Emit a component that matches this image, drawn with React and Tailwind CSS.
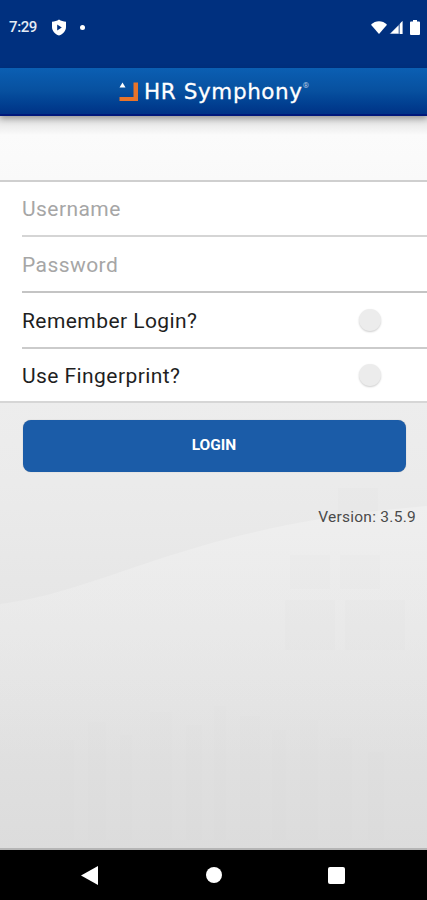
export default function App() {
  const rowText = "text-[21px] font-['Roboto',sans-serif] tracking-[0.43px] mt-[3px]";
  const skyline = [
    [60, 740, 14, 100], [88, 722, 18, 118], [120, 735, 12, 105], [150, 712, 22, 128], [186, 725, 16, 115],
    [214, 706, 12, 134], [240, 716, 20, 124], [272, 730, 14, 110], [300, 720, 18, 120], [330, 738, 22, 102], [368, 752, 16, 88],
  ];
  const panes = [
    [338, 488, 40, 30], [290, 555, 40, 34], [340, 555, 40, 34], [285, 600, 50, 50], [345, 600, 60, 50],
  ];
  return (
    <div className="w-[427px] h-[900px] flex flex-col overflow-hidden font-['Roboto',sans-serif]">
      {/* Status bar */}
      <div className="h-[68px] bg-[#00307f] flex items-start justify-between pl-[9px] pr-[7px] pt-[17px] text-white">
        <div className="flex items-center h-[20px]">
          <span className="text-[15px] font-medium tracking-[-0.4px] w-[32px] text-[#e4ebf5]">7:29</span>
          <svg width="16" height="17" viewBox="0 0 16 17" className="ml-[10px]">
            <path d="M8 0.5 C10 1.8 12.5 2.6 15 2.8 V8 C15 12 12 15.2 8 16.5 C4 15.2 1 12 1 8 V2.8 C3.5 2.6 6 1.8 8 0.5 Z" fill="#ffffff" />
            <path d="M6.2 5.5 L10.8 8.5 L6.2 11.5 Z" fill="#00307f" />
          </svg>
          <span className="ml-[13px] w-[5px] h-[5px] rounded-full bg-white" />
        </div>
        <div className="flex items-center h-[20px] gap-[2px]">
          <svg width="16" height="13" viewBox="0 0 16 13">
            <path d="M0 3.8 C4.5 -0.8 11.5 -0.8 16 3.8 L8 13 Z" fill="#ffffff" />
          </svg>
          <svg width="14" height="13" viewBox="0 0 14 13">
            <path d="M13.5 0 V13 H0.5 Z" fill="#ffffff" fillOpacity="0.4" />
            <path d="M9.5 4.5 V12.5 H1.5 Z" fill="#ffffff" />
            <path d="M11 2.5 V13 H13.5 V0 Z" fill="#ffffff" />
          </svg>
          <svg width="10" height="15" viewBox="0 0 10 15" className="ml-[5px]">
            <path d="M3 0 H7 V1.5 H9 a1 1 0 0 1 1 1 V14 a1 1 0 0 1 -1 1 H1 a1 1 0 0 1 -1 -1 V2.5 a1 1 0 0 1 1 -1 H3 Z" fill="#ffffff" />
          </svg>
        </div>
      </div>

      {/* App header */}
      <div className="h-[48px] bg-gradient-to-b from-[#0b5fb3] via-[#07509f] to-[#003286] border-b-2 border-[#00187a] flex items-center justify-center shadow-[0_3px_6px_rgba(0,0,0,0.3)] z-10 relative">
        <div className="flex items-center ml-[1px] mt-[2px]">
          <svg width="19" height="19" viewBox="0 0 19 19" className="mr-[6px] mt-[-2px]">
            <path d="M0.5 5.5 L3.5 0.5 L6.5 5.5 Z" fill="#ffffff" />
            <path d="M14.5 0.5 H19 V19 H0.5 V15 L14.5 15 Z" fill="#e8742a" />
          </svg>
          <span className="text-[21.5px] font-['DejaVu_Sans',sans-serif] text-white tracking-[0.6px] leading-none [-webkit-text-stroke:0.3px_white]">HR Symphony</span>
          <span className="text-[8px] text-[#b9c9e2] self-start leading-none mt-[1px]">®</span>
        </div>
      </div>

      {/* Content */}
      <div className="relative flex-1 bg-gradient-to-b from-[#f4f4f4] via-[#ebebeb] to-[#dcdcdc] flex flex-col">
        <svg className="absolute left-0 top-0" width="427" height="733" viewBox="0 116 427 733">
          <defs>
            <linearGradient id="waveFade" x1="0" y1="0" x2="0" y2="1">
              <stop offset="0" stopColor="#f3f3f3" stopOpacity="0.55" />
              <stop offset="1" stopColor="#f3f3f3" stopOpacity="0" />
            </linearGradient>
          </defs>
          <path d="M0 604 C110 590 190 525 427 506 V760 H0 Z" fill="url(#waveFade)" />
          <g fill="#cfcfcf" fillOpacity="0.05">
            {skyline.map(([x, y, w, h]) => (
              <rect key={x} x={x} y={y} width={w} height={h} />
            ))}
          </g>
          <g fill="#d8d8d8" fillOpacity="0.04">
            {panes.map(([x, y, w, h]) => (
              <rect key={`${x}-${y}`} x={x} y={y} width={w} height={h} />
            ))}
          </g>
        </svg>
        <div className="h-[64px] bg-gradient-to-b from-[#dedede] via-[#fbfbfb] via-30% to-[#f9f9f9]" />
        <div className="relative bg-white border-t-2 border-[#cfcfcf] border-b-2 border-b-[#d6d6d6] h-[223px] flex flex-col pl-[22px]">
          <div className="h-[55px] border-b-2 border-[#d5d5d5] flex items-center">
            <span className={`${rowText} text-[#a6a6a6]`}>Username</span>
          </div>
          <div className="h-[56px] border-b-2 border-[#c4c4c4] flex items-center">
            <span className={`${rowText} text-[#a6a6a6]`}>Password</span>
          </div>
          <div className="h-[56px] border-b-2 border-[#cbcbcb] flex items-center justify-between pr-[46px]">
            <span className={`${rowText} text-[#1f1f1f]`}>Remember Login?</span>
            <span className="w-[22px] h-[22px] rounded-full bg-[#ececec] shadow-[0_1px_2px_rgba(0,0,0,0.2)]" />
          </div>
          <div className="flex-1 flex items-center justify-between pr-[46px]">
            <span className={`${rowText} text-[#1f1f1f]`}>Use Fingerprint?</span>
            <span className="w-[22px] h-[22px] rounded-full bg-[#ececec] shadow-[0_1px_2px_rgba(0,0,0,0.2)]" />
          </div>
        </div>
        <div className="relative pl-[22.5px] pr-[21.5px] pt-[17px]">
          <div className="h-[51.5px] rounded-[8px] bg-[#1b5ca8] flex items-center justify-center text-white text-[15.5px] font-bold shadow-[0_0_1px_rgba(0,0,0,0.3)]">
            LOGIN
          </div>
        </div>
        <div className="relative text-right pr-[11px] pt-[36.5px] text-[#4a4a4a] text-[15.5px] leading-[18px] tracking-[0.27px]">
          Version: 3.5.9
        </div>
        <div className="absolute bottom-0 left-0 right-0 h-[2px] bg-[#b5b5b5]" />
      </div>

      {/* Nav bar */}
      <div className="h-[50px] bg-black flex items-center justify-between pl-[81px] pr-[82px]">
        <svg width="17" height="19" viewBox="0 0 17 19"><path d="M17 0 V19 L0 9.5 Z" fill="#ffffff" /></svg>
        <span className="w-[16px] h-[16px] rounded-full bg-white ml-[1px]" />
        <span className="w-[17px] h-[17px] rounded-[2px] bg-white" />
      </div>
    </div>
  );
}
